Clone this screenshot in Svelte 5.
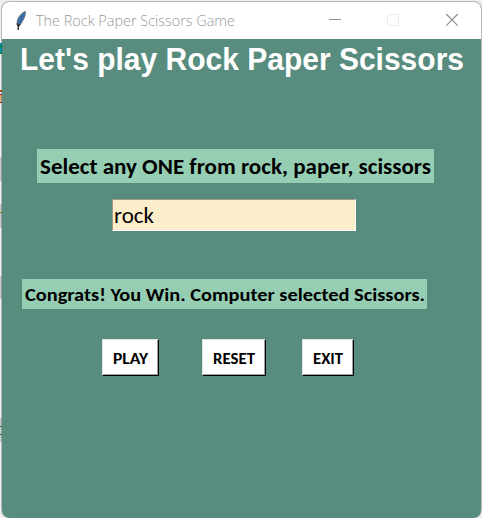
<script>
  let choice = $state('rock');
</script>

{#snippet label(text, width, height, baseline, size, kind)}
  <svg class={kind} {width} {height} role="img" aria-label={text}>
    <text x="0" y={baseline} font-size={size} textLength={width} lengthAdjust="spacingAndGlyphs">{text}</text>
  </svg>
{/snippet}

<div class="desktop">
  <main class="window">
    <header>
      <svg class="feather" width="12" height="22" viewBox="0 0 12 22">
        <path d="M10.4 2.6C7 3.4 3 8.2 2.2 12.4L2 15.5L3.2 17.3L4.8 16.2C8 12 10.6 7 10.4 2.6Z" fill="#3f78b8" stroke="#5c6065" stroke-width=".9" />
        <path d="M8.2 6C5.8 10 4 14 3.2 21" fill="none" stroke="#2c4668" stroke-width=".7" />
        <path d="M2.2 14.5l1 2.5 2-1.6M3.2 17v4" fill="none" stroke="#222" stroke-width="1.2" />
      </svg>
      <div class="caption">{@render label('The Rock Paper Scissors Game', 199, 24, 17, 15, 'light')}</div>
      <svg class="controls" width="132" height="16" viewBox="0 0 132 16">
        <path d="M0 8.5h12" stroke="#909090" />
        <rect x="58.5" y="3.5" width="11" height="11" rx="1.2" fill="none" stroke="#ebebeb" />
        <path d="M117.2 3l11.6 11.6M128.8 3l-11.6 11.6" stroke="#8b8b8b" stroke-width="1.1" />
      </svg>
    </header>
    <section>
      <h1>{@render label("Let's play Rock Paper Scissors", 444, 42, 31, 30.5, 'heading')}</h1>
      <div class="prompt">{@render label('Select any ONE from rock, paper, scissors', 391, 34, 25, 22, 'bold')}</div>
      <div class="entry">{@render label(choice, 40, 30, 23, 22.5, 'regular')}</div>
      <div class="result">{@render label('Congrats! You Win. Computer selected Scissors.', 400, 30, 22, 19, 'bold')}</div>
      <div class="buttons">
        <button class="play">{@render label('PLAY', 35, 34, 23, 15.6, 'bold')}</button>
        <button class="reset" onclick={() => (choice = 'rock')}>{@render label('RESET', 42, 34, 23, 15.6, 'bold')}</button>
        <button class="exit">{@render label('EXIT', 30, 34, 23, 15.6, 'bold')}</button>
      </div>
    </section>
  </main>
</div>

<style>
  :global(body) { margin: 0; overflow: hidden; }
  .desktop {
    box-sizing: border-box;
    width: 482px;
    height: 518px;
    padding: 1px 0 0 1px;
    background:
      linear-gradient(#128a12, #128a12) 0 46px / 2px 1px no-repeat,
      linear-gradient(#128a12, #128a12) 0 53px / 2px 1px no-repeat,
      linear-gradient(#0096a8, #0096a8) 0 43px / 2px 11px no-repeat,
      linear-gradient(#c04a10, #c04a10) 0 90px / 2px 2px no-repeat,
      linear-gradient(#b02030, #b02030) 0 94px / 2px 1px no-repeat,
      linear-gradient(#b02030, #b02030) 0 102px / 2px 1px no-repeat,
      linear-gradient(#d8b080, #d8b080) 0 95px / 2px 7px no-repeat,
      linear-gradient(#c5cacf, #c5cacf) 0 157px / 2px 24px no-repeat,
      linear-gradient(#948000, #948000) 0 212px / 2px 1px no-repeat,
      linear-gradient(#c5cacf, #c5cacf) 0 204px / 2px 24px no-repeat,
      linear-gradient(#c5cacf, #c5cacf) 0 276px / 2px 23px no-repeat,
      linear-gradient(#168516, #168516) 0 426px / 2px 1px no-repeat,
      linear-gradient(#168516, #168516) 0 434px / 2px 1px no-repeat,
      linear-gradient(#c5cacf, #c5cacf) 0 418px / 2px 24px no-repeat,
      #eeeeee;
  }
  .window {
    box-sizing: border-box;
    width: 481px;
    height: 517px;
    border: 1px solid #00000038;
    border-bottom: 0;
    border-radius: 8px;
    overflow: hidden;
    background: #588c7e;
    background-clip: padding-box;
  }
  header {
    display: flex;
    align-items: flex-start;
    height: 37px;
    background: #fff;
  }
  .feather { margin: 7px 0 0 13px; }
  .caption { margin: 7px 0 0 9px; }
  .controls { margin: 9px 0 0 94px; }
  svg { display: block; overflow: visible; flex-shrink: 0; }
  .light { font-family: 'Open Sans', 'Noto Sans', sans-serif; font-weight: 350; fill: #989898; }
  .heading { font-family: 'Liberation Sans', Arial, sans-serif; font-weight: 700; fill: #fff; }
  .bold { font-family: Carlito, Lato, sans-serif; font-weight: 700; fill: #000; }
  .regular { font-family: Carlito, Lato, sans-serif; font-weight: 400; fill: #000; }
  section { display: flex; flex-direction: column; align-items: flex-start; }
  h1 { margin: 0 0 0 18px; height: 42px; }
  .prompt, .result { box-sizing: border-box; background: #96ceb4; padding-left: 3px; }
  .prompt { margin: 68px 0 0 35px; width: 397px; height: 34px; }
  .entry {
    box-sizing: border-box;
    margin: 16px 0 0 110px;
    width: 244px;
    height: 32px;
    padding-left: 1px;
    background: #fceecb;
    border: 1px solid;
    border-color: #a09a88 #fff #fff #a09a88;
  }
  .result { margin: 48px 0 0 20px; width: 405px; height: 30px; }
  .buttons { display: flex; margin: 30px 0 0 100px; }
  button {
    box-sizing: border-box;
    height: 37px;
    padding: 0 0 0 10px;
    border: 1px solid;
    border-color: #e3e3e3 #000 #000 #e3e3e3;
    border-radius: 0;
    background: #fff;
    box-shadow: inset -1px -1px #a0a0a0;
  }
  .play { width: 57px; }
  .reset { width: 64px; margin-left: 43px; }
  .exit { width: 52px; margin-left: 36px; }
</style>
